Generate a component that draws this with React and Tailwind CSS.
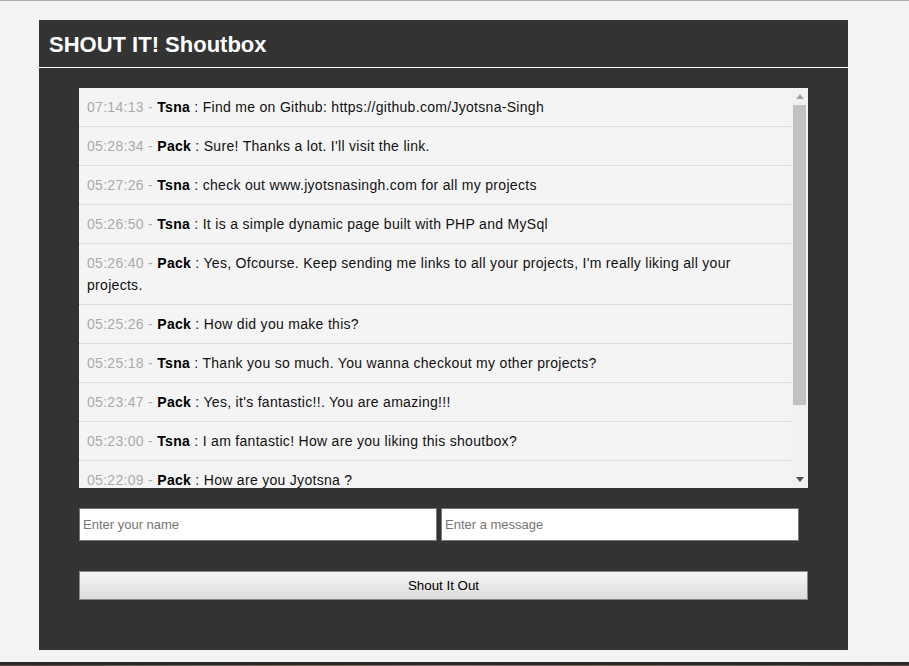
import React from 'react';

const shouts = [
  { time: '07:14:13', name: 'Tsna', text: 'Find me on Github: https://github.com/Jyotsna-Singh' },
  { time: '05:28:34', name: 'Pack', text: "Sure! Thanks a lot. I'll visit the link." },
  { time: '05:27:26', name: 'Tsna', text: 'check out www.jyotsnasingh.com for all my projects' },
  { time: '05:26:50', name: 'Tsna', text: 'It is a simple dynamic page built with PHP and MySql' },
  { time: '05:26:40', name: 'Pack', text: "Yes, Ofcourse. Keep sending me links to all your projects, I'm really liking all your projects." },
  { time: '05:25:26', name: 'Pack', text: 'How did you make this?' },
  { time: '05:25:18', name: 'Tsna', text: 'Thank you so much. You wanna checkout my other projects?' },
  { time: '05:23:47', name: 'Pack', text: "Yes, it's fantastic!!. You are amazing!!!" },
  { time: '05:23:00', name: 'Tsna', text: 'I am fantastic! How are you liking this shoutbox?' },
  { time: '05:22:09', name: 'Pack', text: 'How are you Jyotsna ?' },
];

const App = () => {
  return (
    <div className="h-[666px] overflow-hidden bg-[#f3f3f3] flex flex-col font-['Liberation_Sans',Arial,sans-serif]">
      <div className="h-px bg-[#ababab]" />
      <div className="flex-1 pt-[19px] px-[39px]">
        <div className="w-[809px] h-[630px] bg-[#333333] flex flex-col">
          {/* Header */}
          <header className="h-[48px] border-b border-white flex items-center px-[10px]">
            <h1 className="text-white text-[22px] font-bold leading-none mt-[3px]">SHOUT IT! Shoutbox</h1>
          </header>

          <div className="px-[40px] pt-[20px]">
            {/* Shouts */}
            <div className="h-[400px] w-[729px] bg-[#f4f4f4] flex">
              <ul className="flex-1 overflow-hidden">
                {shouts.map((s, i) => (
                  <li
                    key={i}
                    className="px-[8px] py-[8px] text-[14px] leading-[22px] tracking-[0.3px] text-[#111] border-b border-dotted border-[#c8c8c8]"
                  >
                    <span className="text-[#aaaaaa]">{s.time} - </span>
                    <span className="font-bold text-black">{s.name}</span>
                    <span> : {s.text}</span>
                  </li>
                ))}
              </ul>
              {/* Scrollbar */}
              <div className="w-[17px] bg-[#f1f1f1] flex flex-col items-center">
                <div className="h-[17px] flex items-center justify-center">
                  <svg width="8" height="5" viewBox="0 0 8 5">
                    <polygon points="0,5 8,5 4,0" fill="#a3a3a3" />
                  </svg>
                </div>
                <div className="w-[13px] h-[300px] bg-[#c1c1c1]" />
                <div className="flex-1" />
                <div className="h-[17px] flex items-center justify-center">
                  <svg width="8" height="5" viewBox="0 0 8 5">
                    <polygon points="0,0 8,0 4,5" fill="#505050" />
                  </svg>
                </div>
              </div>
            </div>

            {/* Form */}
            <form className="mt-[20px]">
              <div className="flex gap-[4px]">
                <input
                  type="text"
                  placeholder="Enter your name"
                  className="w-[358px] h-[33px] bg-white border border-[#767676] px-[3px] text-[13px] text-black placeholder:text-[#757575] outline-none"
                />
                <input
                  type="text"
                  placeholder="Enter a message"
                  className="w-[358px] h-[33px] bg-white border border-[#767676] px-[3px] text-[13px] text-black placeholder:text-[#757575] outline-none"
                />
              </div>
              <button
                type="button"
                className="mt-[30px] w-[729px] h-[29px] border border-[#8a8a8a] bg-gradient-to-b from-[#f5f5f5] to-[#dcdcdc] text-[13.33px] text-black"
              >
                Shout It Out
              </button>
            </form>
          </div>
        </div>
      </div>
      {/* Bottom strip */}
      <div className="h-[3px] bg-[#2a2a2a]" />
      <div className="h-[1px] bg-gradient-to-r from-[#5a4a42] via-[#8a7266] to-[#5a4a42]" />
    </div>
  );
};

export default App;
